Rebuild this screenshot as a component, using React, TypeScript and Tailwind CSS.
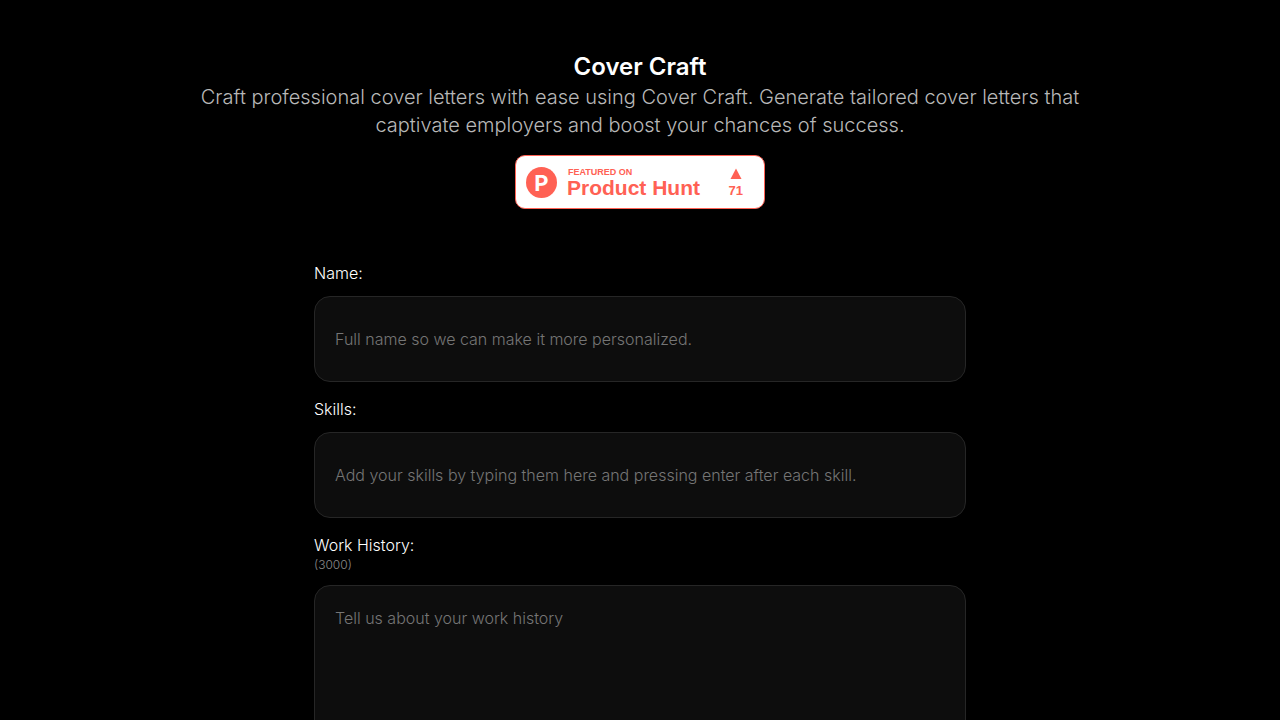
import { useState } from 'react';

const MAX_HISTORY = 3000;

const fieldStyles =
  'block w-full rounded-2xl border border-[#262626] bg-[#0d0d0d] px-5 text-base font-light text-white placeholder:text-[#757575] focus:border-neutral-500 focus:outline-none';

function ProductHuntBadge() {
  return (
    <a
      href="#product-hunt"
      className="mt-4 flex h-[54px] w-[250px] items-center rounded-[10px] border border-[#ff6154] bg-white pr-[21px] pl-[10px] font-['Liberation_Sans',Arial,sans-serif] font-bold text-[#ff6154]"
    >
      <span className="flex size-[31px] items-center justify-center rounded-full bg-[#ff6154] pt-px font-['Inter',sans-serif] text-[22px] leading-none text-white">
        P
      </span>
      <span className="ml-[10px] flex flex-col pt-[2px] text-left whitespace-nowrap">
        <span className="pl-px text-[9px] leading-[10px]">FEATURED ON</span>
        <span className="text-[21px] leading-[22px]">Product Hunt</span>
      </span>
      <span className="ml-auto flex flex-col items-center gap-1 pt-[2px]">
        <svg className="h-[11px] w-[12px]" viewBox="0 0 12 11" fill="currentColor" aria-hidden="true">
          <path d="M6 .5 11.5 11H.5z" />
        </svg>
        <span className="text-[13px] leading-4">71</span>
      </span>
    </a>
  );
}

export default function App() {
  const [name, setName] = useState('');
  const [skill, setSkill] = useState('');
  const [history, setHistory] = useState('');

  return (
    <div className="min-h-screen bg-black px-4 pt-[51px] pb-12 font-['Inter',sans-serif] text-white">
      <header className="mx-auto flex max-w-4xl flex-col items-center text-center">
        <h1 className="text-2xl font-semibold">Cover Craft</h1>
        <p className="text-xl font-light text-[#b8b8b8]">
          Craft professional cover letters with ease using Cover Craft. Generate tailored cover
          letters that captivate employers and boost your chances of success.
        </p>
        <ProductHuntBadge />
      </header>

      <form className="mx-auto mt-[52px] flex max-w-[652px] flex-col gap-[15px]">
        <div>
          <label htmlFor="name" className="block font-light">
            Name:
          </label>
          <input
            id="name"
            type="text"
            value={name}
            onChange={(e) => setName(e.target.value)}
            placeholder="Full name so we can make it more personalized."
            className={`${fieldStyles} mt-[11px] h-[86px]`}
          />
        </div>

        <div>
          <label htmlFor="skills" className="block font-light">
            Skills:
          </label>
          <input
            id="skills"
            type="text"
            value={skill}
            onChange={(e) => setSkill(e.target.value)}
            placeholder="Add your skills by typing them here and pressing enter after each skill."
            className={`${fieldStyles} mt-[11px] h-[86px]`}
          />
        </div>

        <div>
          <label htmlFor="history" className="block font-light">
            Work History:
          </label>
          <p className="text-xs font-light text-[#8a8a8a]">({MAX_HISTORY - history.length})</p>
          <textarea
            id="history"
            rows={8}
            maxLength={MAX_HISTORY}
            value={history}
            onChange={(e) => setHistory(e.target.value)}
            placeholder="Tell us about your work history"
            className={`${fieldStyles} mt-3 resize-none py-5`}
          />
        </div>
      </form>
    </div>
  );
}
